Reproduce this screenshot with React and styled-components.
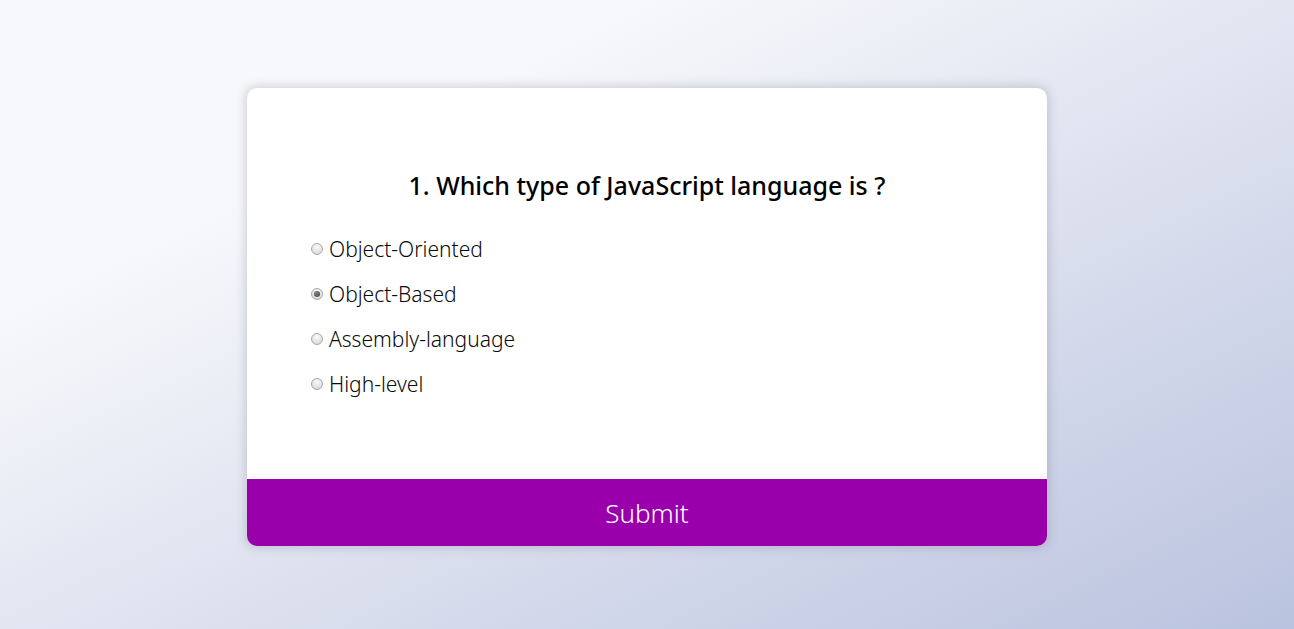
import React, { useState } from 'react';
import styled, { createGlobalStyle } from 'styled-components';

const GlobalStyle = createGlobalStyle`
  * {
    box-sizing: border-box;
  }
  html, body {
    margin: 0;
    padding: 0;
  }
  body {
    font-family: "Noto Sans", "Open Sans", sans-serif;
    background: linear-gradient(to right bottom, #f7f8fb 25%, #bac3df 100%);
    min-height: 100vh;
  }
`;

const Page = styled.main`
  min-height: 100vh;
  display: flex;
  justify-content: center;
  padding-top: 88px;
`;

const QuizCard = styled.div`
  width: 800px;
  height: 458px;
  background: #fff;
  border-radius: 10px;
  box-shadow: 0 0 10px 2px rgba(100, 100, 120, 0.25);
  overflow: hidden;
  display: flex;
  flex-direction: column;
`;

const QuizBody = styled.div`
  flex: 1;
  padding: 80px 64px 0;
`;

const Question = styled.h2`
  margin: 0 0 24px;
  text-align: center;
  font-size: 25px;
  line-height: 34px;
  font-weight: 500;
  color: #000;
`;

const Options = styled.ul`
  list-style: none;
  margin: 0;
  padding: 0;
`;

const Option = styled.li`
  height: 45px;
  display: flex;
  align-items: center;
  font-size: 21px;
  font-weight: 300;
  color: #0a0a0a;
`;

const Radio = styled.input`
  appearance: none;
  width: 12px;
  height: 12px;
  margin: 0 6px 0 0;
  border-radius: 50%;
  border: 1px solid #a9a9a9;
  background: radial-gradient(circle at 50% 30%, #fafafa, #d2d2d2);
  display: grid;
  place-items: center;

  &:checked::after {
    content: '';
    width: 6px;
    height: 6px;
    border-radius: 50%;
    background: radial-gradient(circle at 40% 35%, #888, #3a3a3a);
  }
`;

const SubmitButton = styled.button`
  height: 67px;
  width: 100%;
  border: none;
  background: #9900ab;
  color: #fff;
  font-family: inherit;
  font-size: 26px;
  line-height: 1;
  font-weight: 300;
  cursor: pointer;
`;

const answers = ['Object-Oriented', 'Object-Based', 'Assembly-language', 'High-level'];

const App = () => {
  const [picked, setPicked] = useState('Object-Based');
  return (
    <>
      <GlobalStyle />
      <Page>
        <QuizCard>
          <QuizBody>
            <Question>1. Which type of JavaScript language is ?</Question>
            <Options>
              {answers.map((a) => (
                <Option key={a}>
                  <Radio
                    type="radio"
                    name="answer"
                    id={a}
                    checked={picked === a}
                    onChange={() => setPicked(a)}
                  />
                  <label htmlFor={a}>{a}</label>
                </Option>
              ))}
            </Options>
          </QuizBody>
          <SubmitButton>Submit</SubmitButton>
        </QuizCard>
      </Page>
    </>
  );
};

export default App;
